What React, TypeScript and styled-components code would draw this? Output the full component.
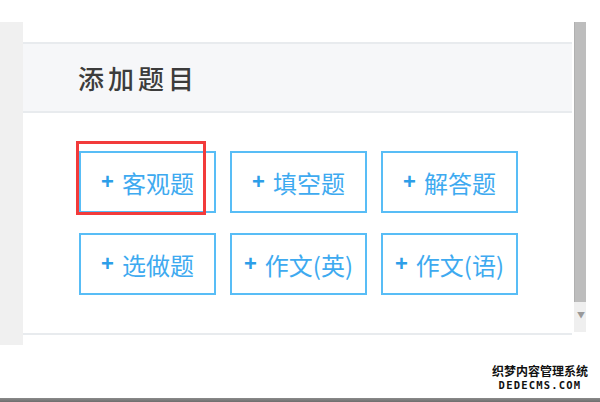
import React from 'react';
import styled, { createGlobalStyle } from 'styled-components';

const GlobalStyle = createGlobalStyle`
  html, body {
    margin: 0;
    padding: 0;
    background: #ffffff;
  }
  body {
    font-family: "Noto Sans CJK SC", "Noto Sans", "Liberation Sans", sans-serif;
  }
`;

const Page = styled.div`
  width: 600px;
  height: 402px;
  display: flex;
  flex-direction: column;
  overflow: hidden;
  background: #fff;
`;

const TopSpace = styled.div`
  height: 22px;
  flex-shrink: 0;
`;

const Frame = styled.div`
  display: flex;
  align-items: flex-start;
  height: 323px;
  flex-shrink: 0;
`;

const SideStrip = styled.div`
  width: 23px;
  height: 323px;
  background: #f0f0f0;
  flex-shrink: 0;
`;

const Panel = styled.div`
  width: 549px;
  display: flex;
  flex-direction: column;
  flex-shrink: 0;
  background: #fff;
`;

const PanelTop = styled.div`
  height: 20px;
`;

const Header = styled.div`
  height: 67px;
  display: flex;
  align-items: center;
  padding-left: 55px;
  background: #f6f7f9;
  border-top: 2px solid #e8ebee;
  border-bottom: 2px solid #e8ebee;
`;

const Title = styled.h2`
  margin: 0;
  font-size: 26px;
  font-weight: 500;
  letter-spacing: 4px;
  color: #3c3c3c;
  line-height: 1;
`;

const Body = styled.div`
  position: relative;
  padding: 38px 0 38px 56px;
  border-bottom: 2px solid #e8ebee;
`;

const ButtonGrid = styled.div`
  display: grid;
  grid-template-columns: repeat(3, 137px);
  grid-auto-rows: 62px;
  column-gap: 14px;
  row-gap: 20px;
`;

const AddButton = styled.button`
  box-sizing: border-box;
  display: flex;
  align-items: center;
  justify-content: center;
  background: #fff;
  border: 2px solid #58bdf6;
  border-radius: 0;
  padding: 0;
  font-family: "Noto Sans CJK SC", "Noto Sans", sans-serif;
  font-size: 24px;
  color: #3eaaf0;
  cursor: pointer;
`;

const Plus = styled.span`
  font-family: "Liberation Sans", sans-serif;
  font-weight: 700;
  font-size: 22px;
  color: #2d9ee8;
  margin-right: 8px;
`;

const Highlight = styled.div`
  position: absolute;
  left: 53px;
  top: 28px;
  width: 130px;
  height: 74px;
  box-sizing: border-box;
  border: 3px solid #f23b3b;
  pointer-events: none;
`;

const Scrollbar = styled.div`
  margin-left: 2px;
  width: 12px;
  height: 310px;
  display: flex;
  flex-direction: column;
  background: #efefef;
  flex-shrink: 0;
`;

const Thumb = styled.div`
  height: 280px;
  background: #bdbdbd;
  border-left: 1px solid #b0b0b0;
`;

const ArrowDown = styled.div`
  flex: 1;
  display: flex;
  align-items: center;
  justify-content: flex-end;
  padding-right: 1px;
  padding-bottom: 6px;
  color: #9a9a9a;
  font-size: 8px;
`;

const Footer = styled.div`
  flex: 1;
  display: flex;
  flex-direction: column;
  justify-content: flex-end;
`;

const Watermark = styled.div`
  align-self: flex-end;
  margin-right: 12px;
  margin-bottom: 8px;
  display: flex;
  flex-direction: column;
  align-items: center;
  color: #111;
  text-shadow: 1px 0 0 #fff, -1px 0 0 #fff, 0 1px 0 #fff, 0 -1px 0 #fff;
  line-height: 1;
`;

const MarkCn = styled.span`
  font-family: "Noto Sans CJK SC", sans-serif;
  font-weight: 700;
  font-size: 12px;
`;

const MarkEn = styled.span`
  margin-top: 3px;
  font-family: "DejaVu Sans Mono", monospace;
  font-weight: 700;
  font-size: 10.5px;
  letter-spacing: 1.2px;
`;

const BottomBar = styled.div`
  height: 4px;
  background: linear-gradient(#8a8a8a, #6e6e6e);
`;

const types = ['客观题', '填空题', '解答题', '选做题', '作文(英)', '作文(语)'];

export default function App() {
  return (
    <>
      <GlobalStyle />
      <Page>
        <TopSpace />
        <Frame>
          <SideStrip />
          <Panel>
            <PanelTop />
            <Header>
              <Title>添加题目</Title>
            </Header>
            <Body>
              <ButtonGrid>
                {types.map((t) => (
                  <AddButton key={t}>
                    <Plus>+</Plus>
                    {t}
                  </AddButton>
                ))}
              </ButtonGrid>
              <Highlight />
            </Body>
          </Panel>
          <Scrollbar>
            <Thumb />
            <ArrowDown>▼</ArrowDown>
          </Scrollbar>
        </Frame>
        <Footer>
          <Watermark>
            <MarkCn>织梦内容管理系统</MarkCn>
            <MarkEn>DEDECMS.COM</MarkEn>
          </Watermark>
          <BottomBar />
        </Footer>
      </Page>
    </>
  );
}
